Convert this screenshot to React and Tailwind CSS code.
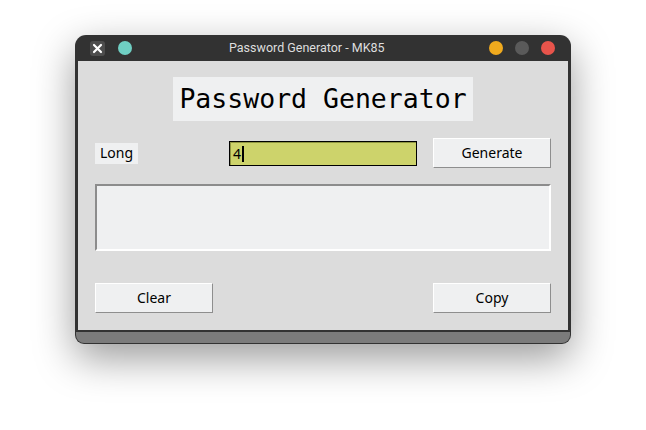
import React from "react";

export default function App() {
  return (
    <div className="w-[646px] h-[430px] bg-white pt-[35px] pl-[75px]">
      <div className="w-[496px] h-[309px] rounded-t-[11px] rounded-b-[9px] bg-[#323232] shadow-[0_14px_40px_rgba(0,0,0,0.4)] flex flex-col">
        {/* Title bar */}
        <div className="h-[26px] flex items-center pl-[15px] pr-[16px]">
          <div className="w-[15px] h-[15px] rounded-[3px] bg-[#4d4d4d] flex items-center justify-center">
            <svg width="11" height="11" viewBox="0 0 11 11">
              <path d="M2 2 L9 9 M9 2 L2 9" stroke="#ffffff" strokeWidth="2.2" strokeLinecap="round" />
            </svg>
          </div>
          <div className="w-[14px] h-[14px] rounded-full bg-[#6fcfc3] ml-[13px]" />
          <div className="ml-[97px] text-[12.5px] text-[#dedede] font-['Roboto',sans-serif] leading-none">
            Password Generator - MK85
          </div>
          <div className="flex-1" />
          <div className="flex gap-[12px]">
            <div className="w-[14px] h-[14px] rounded-full bg-[#f0aa1e]" />
            <div className="w-[14px] h-[14px] rounded-full bg-[#5a5a5a]" />
            <div className="w-[14px] h-[14px] rounded-full bg-[#e8544b]" />
          </div>
        </div>
        {/* Content */}
        <div className="mx-[3px] h-[269px] bg-[#dcdcdc] flex flex-col pt-[16px] pl-[17px] pr-[17px] font-['Noto_Sans',sans-serif] text-[14px] text-black">
          <div className="flex justify-center">
            <div className="w-[300px] h-[44px] bg-[#eff0f1] flex items-center justify-center font-['DejaVu_Sans_Mono',monospace] text-[26.5px] leading-none">
              Password Generator
            </div>
          </div>
          <div className="mt-[17px] h-[30px] flex items-center">
            <div className="w-[43px] h-[21px] bg-[#eff0f1] flex items-center justify-center leading-none">
              Long
            </div>
            <div className="flex-1" />
            <div className="w-[188px] h-[25px] border border-black mr-[16px]">
              <div className="h-full border-t border-l border-[#8f9540] border-r-[#f4f7b0] border-b-[#f4f7b0] bg-[#cdd36b] flex items-center pl-[2px] leading-none">
                <span>4</span>
                <span className="w-[2px] h-[16px] bg-black ml-[1px]" />
              </div>
            </div>
            <div className="w-[118px] h-[30px] bg-[#eff0f1] border border-white border-r-[#8e8e8e] border-b-[#8e8e8e] flex items-center justify-center leading-none">
              Generate
            </div>
          </div>
          <div className="mt-[16px] h-[67px] bg-[#eff0f1] border-2 border-[#8c8c8c] border-r-white border-b-white" />
          <div className="mt-[32px] h-[30px] flex justify-between">
            <div className="w-[118px] h-[30px] bg-[#eff0f1] border border-white border-r-[#8e8e8e] border-b-[#8e8e8e] flex items-center justify-center leading-none">
              Clear
            </div>
            <div className="w-[118px] h-[30px] bg-[#eff0f1] border border-white border-r-[#8e8e8e] border-b-[#8e8e8e] flex items-center justify-center leading-none">
              Copy
            </div>
          </div>
        </div>
        {/* Bottom bar */}
        <div className="flex-1 mx-[1px] mb-[1px] mt-[2px] bg-[#7b7b7b] rounded-b-[8px]" />
      </div>
    </div>
  );
}
